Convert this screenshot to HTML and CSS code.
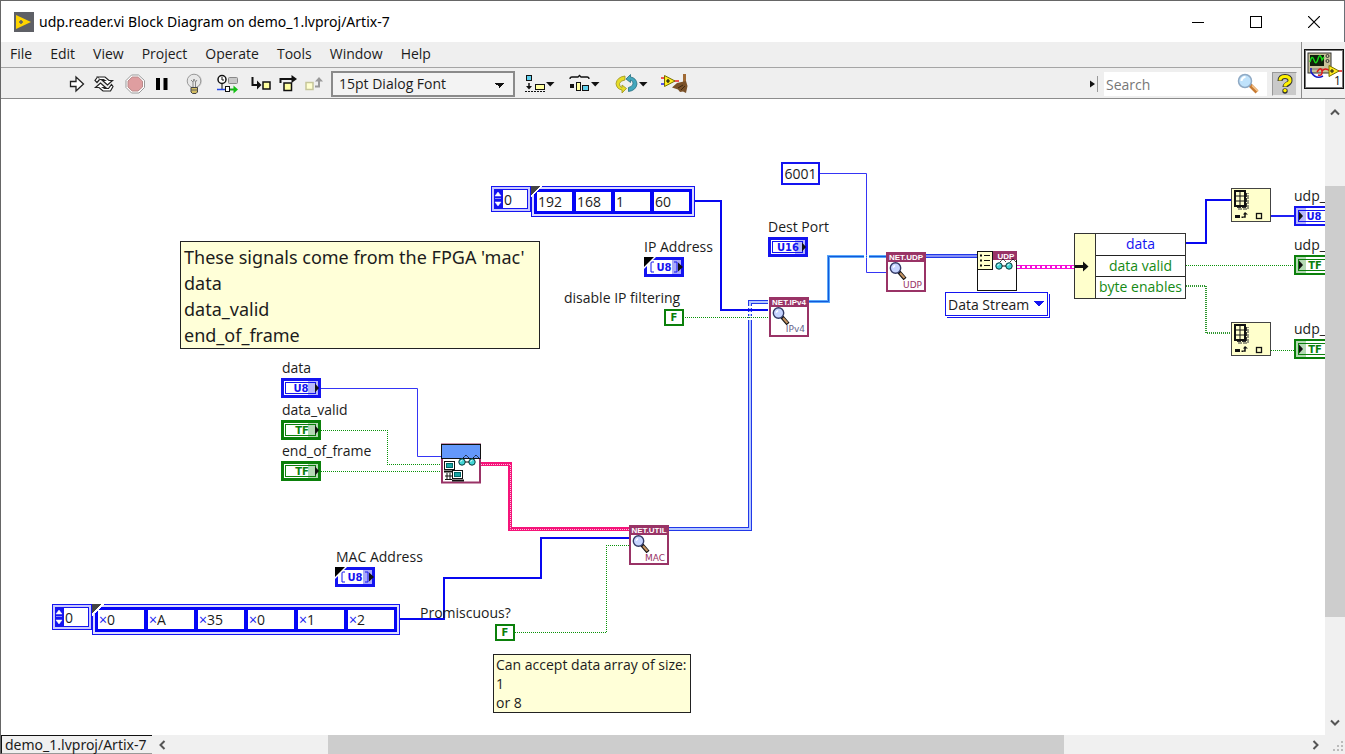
FILE: index.html
```html
<!DOCTYPE html>
<html lang="en">
<head>
<meta charset="utf-8">
<title>udp.reader.vi Block Diagram on demo_1.lvproj/Artix-7</title>
<link rel="stylesheet" href="styles.css">
</head>
<body>
<div class="window">
  <header class="titlebar">
    <svg class="app-icon" viewBox="0 0 20 20" aria-hidden="true">
      <rect width="20" height="20" fill="#5e6066"/>
      <path d="M2 3 L17 10 L2 17 Z" fill="#ffd500"/>
      <path d="M7 8 v4 M5 10 h4" stroke="#5e6066" stroke-width="1.500"/>
    </svg>
    <h1 class="title">udp.reader.vi Block Diagram on demo_1.lvproj/Artix-7</h1>
    <div class="window-buttons">
      <button class="window-button" aria-label="Minimize"><svg width="12" height="12" viewBox="0 0 12 12"><path d="M0 6.500h12" stroke="#000"/></svg></button>
      <button class="window-button" aria-label="Maximize"><svg width="12" height="12" viewBox="0 0 12 12"><rect x=".5" y=".5" width="11" height="11" fill="none" stroke="#000"/></svg></button>
      <button class="window-button" aria-label="Close"><svg width="12" height="12" viewBox="0 0 12 12"><path d="M0 0L12 12M12 0L0 12" stroke="#000" stroke-width="1.200"/></svg></button>
    </div>
  </header>

  <div class="bars">
    <div class="bar-stack">
      <nav class="menu">
        <button>File</button><button>Edit</button><button>View</button><button>Project</button><button>Operate</button><button>Tools</button><button>Window</button><button>Help</button>
      </nav>
      <div class="toolbar">
        <button class="tool" aria-label="Run"><svg width="16" height="18" viewBox="0 0 16 18"><path d="M1.500 6.500H7V2l7.500 7L7 16v-4.500H1.500z" fill="#fff" stroke="#222" stroke-width="1.300"/></svg></button>
        <button class="tool" aria-label="Run continuously"><svg width="22" height="18" viewBox="0 0 22 18"><path d="M4.500 2H12l4 3.500h3.500L14.500 10l-5-4.500h2.500L10.500 4.500H6.500z" fill="#fff" stroke="#222" stroke-width="1.200"/><path d="M17.500 16H10l-4-3.500H2.500L7.500 8l5 4.500H10l1.500 1h4l3-4 1.500 2z" fill="#fff" stroke="#222" stroke-width="1.200"/><path d="M4.500 2L2 5.500 4 7.500 6.500 4.500" fill="#fff" stroke="#222" stroke-width="1.200"/></svg></button>
        <button class="tool" aria-label="Abort execution"><svg width="24" height="20" viewBox="0 0 24 20"><path d="M8.500 1h7L21.500 6.500v7L16 19H8.500L3 13.500v-7z" fill="#fff" stroke="#999"/><path d="M9.200 3h6l4.300 4.200v5.800L15 17H9.200L5 13V7z" fill="#df9ea0" stroke="#b98a8a"/></svg></button>
        <button class="tool" aria-label="Pause"><svg width="14" height="14" viewBox="0 0 14 14"><path d="M1 1h4v12H1zM8.500 1h4v12h-4z" fill="#000"/></svg></button>
        <button class="tool tool-apart" aria-label="Highlight execution"><svg width="18" height="22" viewBox="0 0 18 22"><circle cx="10" cy="8" r="7" fill="#ccc"/><circle cx="9" cy="8" r="6.800" fill="#e8e8e8" stroke="#999"/><path d="M6 7l2 2 1-3 1.500 3L12 7M8 9v6M10.500 9v6" fill="none" stroke="#888"/><path d="M6 14.500h6.500V19L11 20.500H7.500L6 19z" fill="#d3bd62" stroke="#444"/><path d="M6 17h6.500" stroke="#666"/></svg></button>
        <button class="tool" aria-label="Retain wire values"><svg width="32" height="20" viewBox="0 0 32 20"><circle cx="11" cy="5.500" r="4" fill="#fff" stroke="#111" stroke-width="1.500"/><path d="M11 3v3h2M11 9.500V15" fill="none" stroke="#111"/><rect x="17.500" y="3.500" width="9" height="6" rx="1" fill="#c8c8c8" stroke="#888"/><path d="M6 15.500h13" stroke="#2548e8" stroke-width="1.500"/><path d="M19 15.500h4" stroke="#1aa51a" stroke-width="2"/><path d="M22.500 11.500v8l4.500-4z" fill="#12c012"/><rect x="14.500" y="12.500" width="4" height="5" fill="#fff" stroke="#111"/></svg></button>
        <button class="tool" aria-label="Step into"><svg width="20" height="18" viewBox="0 0 20 18"><path d="M1.500 2v8h6" fill="none" stroke="#111" stroke-width="2"/><path d="M6 5.500v9l4.500-4.500z" fill="#111"/><rect x="12" y="7" width="7" height="7" fill="#ffffa0" stroke="#111" stroke-width="1.500"/></svg></button>
        <button class="tool" aria-label="Step over"><svg width="18" height="18" viewBox="0 0 18 18"><path d="M1.500 8V4h12" fill="none" stroke="#111" stroke-width="2"/><path d="M12.500 0v8L18 4z" fill="#111"/><rect x="5" y="8" width="7.500" height="7.500" fill="#ffffa0" stroke="#111" stroke-width="1.500"/></svg></button>
        <button class="tool" aria-label="Step out"><svg width="18" height="18" viewBox="0 0 18 18"><rect x="1" y="7.500" width="7" height="7" fill="#ffffd0" stroke="#c6c69a" stroke-width="1.500"/><path d="M10 11.500h4V5" fill="none" stroke="#999" stroke-width="2"/><path d="M10 6.500h8L14 2z" fill="#999"/></svg></button>
        <select class="font-select" aria-label="Text settings"><option>15pt Dialog Font</option></select>
        <button class="tool" aria-label="Align objects"><svg width="32" height="20" viewBox="0 0 32 20"><rect x="3.500" y="1.500" width="5" height="5" fill="#5fd0ee" stroke="#111"/><path d="M6 9v4" stroke="#111" stroke-width="1.500"/><path d="M2 17.500h20" stroke="#111" stroke-dasharray="2 1"/><path d="M3 12h6L6 15.500z" fill="#111"/><rect x="12.500" y="10.500" width="9" height="5" fill="#ffffa0" stroke="#111"/><path d="M23 8h8.500l-4.300 4.500z" fill="#111"/></svg></button>
        <button class="tool" aria-label="Distribute objects"><svg width="38" height="20" viewBox="0 0 38 20"><path d="M7 5q0-2 2-2h6l1.500-1.500L18 3h6q2 0 2 2" fill="none" stroke="#111" stroke-width="1.300"/><rect x="7" y="10" width="4" height="4" fill="#111"/><rect x="13.500" y="8.500" width="4" height="8" fill="#ffffa0" stroke="#111"/><rect x="19.500" y="11.500" width="6" height="5" fill="#5fd0ee" stroke="#111"/><path d="M28 8h8.500l-4.300 4.500z" fill="#111"/></svg></button>
        <button class="tool" aria-label="Reorder"><svg width="40" height="20" viewBox="0 0 40 20"><path d="M16 2Q8 3 7 9.500 7.500 15 13 16v3l4.500-4.500L13 11v2.500q-3-1-2.500-4Q11.500 6.500 16 6z" fill="#e6dc28" stroke="#9a921c" stroke-width=".8"/><path d="M19.500 17.500q7.500-1 8.500-7.500-.5-6-6.500-7V.5L17 5l4.500 3.500V6q3 1 2.500 4-1 3-4.500 3.500z" fill="#43a7bd" stroke="#246d7f" stroke-width=".8"/><path d="M30 8h8.500l-4.300 4.500z" fill="#111"/></svg></button>
        <button class="tool" aria-label="Clean up diagram"><svg width="32" height="20" viewBox="0 0 32 20"><path d="M4 4h4M17 7h5" stroke="#e22" stroke-width="1.500"/><path d="M4 10h4" stroke="#22e" stroke-width="1.500"/><path d="M7.500 1.500L18 7 7.500 12.500z" fill="#ffee20" stroke="#766c00"/><path d="M11 5v4M9 7h4" stroke="#111" stroke-width="1.200"/><path d="M26 0h3v9h-3z" fill="#a06a35"/><path d="M20 9l9-2 1.500 5-1.500 7-3-1.500-3 .5-2-2.500-6-2z" fill="#7a5129"/><path d="M21 14l5-3M24 16l4-4" stroke="#3f2810"/></svg></button>

        <div class="search-area">
          <button class="search-toggle" aria-label="Collapse search"><svg width="9" height="16" viewBox="0 0 9 16"><path d="M0 4.500l5 3.500-5 3.500z" fill="#111"/><path d="M7.500 0v16" stroke="#999"/></svg></button>
          <label class="search">
            <input type="search" placeholder="Search" aria-label="Search">
            <svg width="22" height="22" viewBox="0 0 22 22"><path d="M13 12l7 7" stroke="#c77a32" stroke-width="4"/><path d="M15 12.500l6 6" stroke="#f6c68d" stroke-width="1.500"/><circle cx="8" cy="8" r="6.500" fill="#bfe2fb" stroke="#8fa9c4" stroke-width="1.500"/><path d="M4.500 8a4 4 0 0 1 4-4" stroke="#fff" stroke-width="2" fill="none"/></svg>
          </label>
          <button class="help-button" aria-label="Context help"><svg width="16" height="20" viewBox="0 0 16 20"><path d="M3 7q0-4.500 5-4.500T13 6.500q0 2-2.500 3.500T8 13" fill="none" stroke="#333" stroke-width="5"/><circle cx="8" cy="17" r="2.700" fill="#333"/><path d="M3 6.500q0-4 5-4t5 4q0 2-2.500 3T8 12.500" fill="none" stroke="#fff200" stroke-width="3"/><circle cx="8" cy="16.500" r="1.700" fill="#fff200"/></svg></button>
        </div>
      </div>
    </div>
    <div class="vi-pane">
      <button class="vi-icon" aria-label="VI icon"><svg width="38" height="38" viewBox="0 0 38 38"><rect x="3" y="3" width="23" height="20" fill="#c9c29a" stroke="#333"/><rect x="5" y="5" width="14" height="11" fill="#10200c"/><path d="M5 12q2-8 4-2t4-1 4 1l2-3" fill="none" stroke="#17d817" stroke-width="1.400"/><circle cx="22.500" cy="6" r="1.500" fill="none" stroke="#333"/><circle cx="22.500" cy="11" r="1.500" fill="none" stroke="#333"/><path d="M5 19h13" stroke="#777"/><path d="M6 18v4q5 8 12 4" fill="none" stroke="#1818c8" stroke-width="1.500"/><path d="M12 22q4-6 5-1t-4 4M17 21q3-4 8 0M33 21h4" fill="none" stroke="#e01818" stroke-width="1.500"/><path d="M24 15.500L34 21l-10 5.500z" fill="#ffe81a" stroke="#777000"/><path d="M27 19v4M25 21h4" stroke="#111"/><text x="29" y="35" class="vi-number">1</text></svg></button>
    </div>
  </div>

  <main class="workspace">
    <section class="canvas" aria-label="Block diagram">
      <svg class="wires" width="1324" height="636" viewBox="1 99 1324 636" aria-hidden="true">
        <defs>
          <g id="terminal-frame">
            <rect x="1.500" y="1.500" width="37" height="17" fill="#fff" stroke="currentColor" stroke-width="3"/>
            <rect x="27" y="3" width="10" height="14" fill="currentColor" opacity=".3"/>
            <rect x="4.500" y="4.500" width="30" height="11" fill="none" stroke="currentColor"/>
          </g>
          <path id="input-arrow" d="M34 5.500L38 10l-4 4.500z" fill="#111"/>
          <g id="array-terminal">
            <rect x="1.500" y="1.500" width="37" height="17" fill="#fff" stroke="currentColor" stroke-width="3"/>
            <rect x="28" y="3" width="9" height="14" fill="#a9a9fa"/>
            <path d="M10 5H7v10h3M30 5h3v10h-3" fill="none" stroke="currentColor"/>
            <path d="M0 0h12L0 12z" fill="#fff"/><path d="M0 0h10L0 10z" fill="#000"/>
            <path d="M34 5.500L39 10l-5 4.500z" fill="#111"/>
            <text x="20" y="14" class="type">U8</text>
          </g>
          <g id="output-terminal">
            <rect x="1" y="1" width="37" height="18" fill="#fff" stroke="currentColor" stroke-width="2"/>
            <rect x="2" y="2" width="10" height="16" fill="currentColor" opacity=".3"/>
            <rect x="4.500" y="4.500" width="35" height="11" fill="none" stroke="currentColor"/>
            <path d="M5 5.500L9 10l-4 4.500z" fill="#111"/>
          </g>
          <g id="net-node">
            <rect x="1" y="1" width="38" height="38" fill="#fff" stroke="#993366" stroke-width="2"/>
            <rect x="0" y="0" width="40" height="10" fill="#993366"/>
            <path d="M13 20l6 7" stroke="#111" stroke-width="4"/><path d="M14 21l4.500 5" stroke="#c49363" stroke-width="2"/>
            <circle cx="9.500" cy="16" r="5.200" fill="#c6d4ff" stroke="#333a66" stroke-width="1.400"/>
            <path d="M7 15.500l2-2" stroke="#fff" stroke-width="1.500"/>
          </g>
          <g id="glasses" fill="#42d5d5" stroke="#063a3a" stroke-width="1">
            <path d="M3 6l5-5 3 3M13 6l5-5 3 3" fill="none" stroke="#111" stroke-dasharray="2 1"/>
            <circle cx="4" cy="8" r="3.200"/><circle cx="14" cy="8" r="3.200"/><path d="M7 8h4" stroke="#111"/>
            <path d="M2.500 7.500l2-1.500M12.500 7.500l2-1.500" stroke="#fff"/>
          </g>
          <g id="computer"><rect x=".5" y=".5" width="10" height="8" fill="#fff" stroke="#111"/><rect x="2.500" y="2.500" width="6" height="4" fill="#18a5a5" stroke="#066"/><path d="M0 10.500h12" stroke="#111" stroke-width="2"/></g>
          <g id="index-node">
            <rect x=".5" y=".5" width="39" height="33" fill="#ffffcc" stroke="#444"/>
            <path d="M7 21h10V5M6 19.500h9.500V4" fill="none" stroke="#333" stroke-dasharray="4 1"/>
            <rect x="4" y="3" width="10" height="15" fill="#ffffcc" stroke="#111" stroke-width="2"/>
            <path d="M9 3v15M4 8h10M4 13h10" stroke="#111" stroke-width="1"/>
            <path d="M4 27h5v3H4zM10.500 28.500h2v1.500h-2z" fill="#111"/><path d="M12.500 29H14v-3" stroke="#111" fill="none" stroke-width="1.500"/><path d="M12 26.500h5L14 24z" fill="#111"/>
            <rect x="25.500" y="25.500" width="5" height="5" fill="#ffffcc" stroke="#111" stroke-width="1.300"/>
          </g>
        </defs>

        <g class="wire-thin">
          <path d="M820 173.500H866.500V272.500H886"/>
          <path d="M321 388.500H417.500V456.500H441"/>
        </g>
        <path class="wire-cluster-light" d="M809 301.500H828.500V256.500H886"/>
        <path class="wire-cluster-core" d="M809 301.500H828.500V256.500H886"/>
        <path d="M864 252h2v9h-2zM867 252h2v9h-2z" fill="#fff"/>
        <path class="wire-cluster" d="M926 256H978"/>
        <path class="wire-udp-core" d="M926 256H978"/>
        <path class="wire-cluster" d="M669 529H750V302H768"/>
        <path class="wire-core" d="M669 529H750V302H768"/>
        <path d="M746 306h8v2h-8zM746 312h8v2h-8zM746 316h8v1h-8zM746 318h8v2h-8z" fill="#fff"/>
        <path class="wire-array" d="M693 201H721V310H768"/>
        <path class="wire-array" d="M400 619H444V578H541V538H629"/>
        <path class="wire-array" d="M1186 243H1206V200H1231"/>
        <path class="wire-number" d="M1271 216H1294"/>
        <path class="wire-pink" d="M481 464H510V529H629"/>
        <path class="wire-pink-core" d="M481 464.500H510.500V529.500H629"/>
        <path class="wire-stream" d="M1017 267H1074"/>
        <path class="wire-stream-core" d="M1017 267H1074"/>
        <g class="wire-boolean">
          <path d="M321 430.500H387.500V464.500H441"/>
          <path d="M321 471.500H441"/>
          <path d="M683 317.500H768"/>
          <path d="M515 632.500H606.500V545.500H629"/>
          <path d="M1186 265.500H1294"/>
          <path d="M1271 350.500H1294"/>
        </g>
        <path class="wire-boolean-array" d="M1186 286H1206V333H1231"/>

        <g color="#1414f0">
          <use href="#terminal-frame" x="281" y="378"/><use href="#input-arrow" x="281" y="378"/><text x="301" y="392" class="type">U8</text>
          <use href="#terminal-frame" x="768" y="237"/><use href="#input-arrow" x="768" y="237"/><text x="788" y="251" class="type">U16</text>
          <use href="#output-terminal" x="1294" y="206"/><text x="1314" y="220" class="type">U8</text>
          <use href="#array-terminal" x="644" y="257"/>
          <use href="#array-terminal" x="335" y="567"/>
        </g>
        <g color="#0b800b">
          <use href="#terminal-frame" x="281" y="420"/><use href="#input-arrow" x="281" y="420"/><text x="302" y="434" class="type">TF</text>
          <use href="#terminal-frame" x="281" y="461"/><use href="#input-arrow" x="281" y="461"/><text x="302" y="475" class="type">TF</text>
          <use href="#output-terminal" x="1294" y="255"/><text x="1315" y="269" class="type">TF</text>
          <use href="#output-terminal" x="1294" y="339"/><text x="1315" y="353" class="type">TF</text>
        </g>

        <use href="#net-node" x="769" y="297"/>
        <text x="789" y="305" class="node-head">NET.IPv4</text><text x="805" y="332" class="node-foot node-foot-gray">IPv4</text>
        <use href="#net-node" x="886" y="252"/>
        <text x="906" y="260" class="node-head">NET.UDP</text><text x="922" y="288" class="node-foot">UDP</text>
        <use href="#net-node" x="629" y="525"/>
        <text x="649" y="533" class="node-head">NET.UTIL</text><text x="665" y="561" class="node-foot">MAC</text>

        <rect x="977.500" y="251.500" width="39" height="39" fill="#fff" stroke="#111"/>
        <rect x="993" y="251" width="24" height="9" fill="#993366"/>
        <text x="1006" y="259" class="node-head">UDP</text>
        <rect x="977.500" y="251.500" width="15" height="18" fill="#ffffcc" stroke="#111"/>
        <path d="M984 255.500h6M984 260.500h6M984 265.500h6" stroke="#111"/><path d="M980 255.500h2M980 260.500h2M980 265.500h2" stroke="#111" stroke-width="2"/>
        <use href="#glasses" x="995" y="258"/>

        <rect x="442" y="444.500" width="38" height="38" fill="#fff" stroke="#993366" stroke-width="2"/>
        <rect x="441.500" y="444.500" width="39" height="14" fill="#6498fb" stroke="#111"/>
        <use href="#glasses" x="458" y="454"/>
        <use href="#computer" x="444" y="461"/><use href="#computer" x="452" y="470"/>
        <path d="M445 476h7M445 479.500h7M447 473v6M450 473v6" stroke="#111" fill="none"/>

        <use href="#index-node" x="1231" y="188"/>
        <use href="#index-node" x="1231" y="322"/>
      </svg>

      <span class="label at-data">data</span>
      <span class="label at-data-valid">data_valid</span>
      <span class="label at-end-frame">end_of_frame</span>
      <span class="label at-mac-address">MAC Address</span>
      <span class="label at-ip-address">IP Address</span>
      <label class="label at-filtering" for="filtering">disable IP filtering</label>
      <span class="label at-dest-port">Dest Port</span>
      <label class="label at-promiscuous" for="promiscuous">Promiscuous?</label>
      <span class="label at-udp-1">udp_</span>
      <span class="label at-udp-2">udp_</span>
      <span class="label at-udp-3">udp_</span>

      <p class="note note-signals">These signals come from the FPGA 'mac'<br>data<br>data_valid<br>end_of_frame</p>
      <p class="note note-size">Can accept data array of size:<br>1<br>or 8</p>

      <div class="array-constant at-ip-array">
        <div class="array-index"><svg width="8" height="20" viewBox="0 0 8 20"><rect width="8" height="20" fill="#1414f0"/><path d="M1 7l3-4 3 4zM1 13l3 4 3-4zM1 9.500h6" fill="#fff" stroke="#fff" stroke-width=".5"/></svg><input value="0" aria-label="IP array index"></div>
        <div class="array-frame"><div class="array-cells">
          <span class="cell"><input value="192" aria-label="IP byte 1"></span><span class="cell"><input value="168" aria-label="IP byte 2"></span><span class="cell"><input value="1" aria-label="IP byte 3"></span><span class="cell"><input value="60" aria-label="IP byte 4"></span>
        </div></div>
      </div>

      <div class="array-constant at-mac-array">
        <div class="array-index"><svg width="8" height="20" viewBox="0 0 8 20"><rect width="8" height="20" fill="#1414f0"/><path d="M1 7l3-4 3 4zM1 13l3 4 3-4zM1 9.500h6" fill="#fff" stroke="#fff" stroke-width=".5"/></svg><input value="0" aria-label="MAC array index"></div>
        <div class="array-frame"><div class="array-cells">
          <label class="cell cell-hex">×<input value="0"></label><label class="cell cell-hex">×<input value="A"></label><label class="cell cell-hex">×<input value="35"></label><label class="cell cell-hex">×<input value="0"></label><label class="cell cell-hex">×<input value="1"></label><label class="cell cell-hex">×<input value="2"></label>
        </div></div>
      </div>

      <input class="constant at-port" value="6001" aria-label="Port constant">
      <button class="boolean at-filtering-value" id="filtering">F</button>
      <button class="boolean at-promiscuous-value" id="promiscuous">F</button>
      <select class="poly-select" aria-label="Instance"><option>Data Stream</option></select>

      <div class="unbundle">
        <svg class="unbundle-input" width="20" height="64" viewBox="0 0 20 64"><path d="M0 31h8v-3.500l5.500 5-5.500 5V34H0z" fill="#111"/></svg>
        <div class="unbundle-rows"><span class="is-number">data</span><span>data valid</span><span>byte enables</span></div>
      </div>
    </section>

    <div class="scroll scroll-vertical">
      <button aria-label="Scroll up"><svg width="10" height="8" viewBox="0 0 10 8"><path d="M1 6.500l4-4 4 4" class="chevron"/></svg></button>
      <div class="track"><i class="before"></i><i class="thumb"></i><i class="after"></i></div>
      <button aria-label="Scroll down"><svg width="10" height="8" viewBox="0 0 10 8"><path d="M1 1.500l4 4 4-4" class="chevron"/></svg></button>
    </div>
    <footer class="statusbar">
      <button class="target">demo_1.lvproj/Artix-7</button>
      <div class="scroll scroll-horizontal">
        <button aria-label="Scroll left"><svg width="8" height="10" viewBox="0 0 8 10"><path d="M6.500 1l-4 4 4 4" class="chevron"/></svg></button>
        <div class="track"><i class="before"></i><i class="thumb"></i><i class="after"></i></div>
        <button aria-label="Scroll right"><svg width="8" height="10" viewBox="0 0 8 10"><path d="M1.500 1l4 4-4 4" class="chevron"/></svg></button>
      </div>
      <svg class="grip" width="19" height="19" viewBox="0 0 19 19" aria-hidden="true"><path d="M15 6h2v2h-2zM15 10h2v2h-2zM15 14h2v2h-2zM11 10h2v2h-2zM11 14h2v2h-2zM7 14h2v2H7z" fill="#bbb"/></svg>
    </footer>
  </main>
</div>
</body>
</html>
```
FILE: styles.css
```css
:root {
  --blue: #1414f0;
  --green: #0b800b;
  --chrome: #efefef;
  --line: #8c8c8c;
}

* { box-sizing: border-box; }

body {
  margin: 0;
  font-family: "Open Sans", "Noto Sans", sans-serif;
  font-size: 14px;
  color: #1c1c1c;
  background: #fff;
}

button, input, select {
  margin: 0;
  padding: 0;
  border: 0;
  border-radius: 0;
  background: none;
  color: inherit;
  font: inherit;
}

svg { display: block; flex: none; }

.window {
  display: flex;
  flex-direction: column;
  height: 100vh;
  border-top: 1px solid #666;
  border-left: 1px solid #666;
  overflow: hidden;
}

/* Title bar */
.titlebar {
  display: flex;
  align-items: center;
  flex: none;
  height: 41px;
  padding-left: 13px;
  border-right: 1px solid #6a7078;
}
.app-icon { width: 20px; height: 20px; }
.title {
  flex: 1;
  margin: 0 0 0 5px;
  font-family: "Noto Sans", sans-serif;
  font-size: 14px;
  font-weight: 400;
  color: #000;
  white-space: nowrap;
}
.window-buttons { display: flex; margin-right: 1px; }
.window-button {
  display: grid;
  place-items: center;
  width: 58px;
  height: 40px;
}

/* Menu and toolbar */
.bars {
  display: flex;
  flex: none;
  padding-right: 1px;
  background: var(--chrome);
  border-bottom: 1px solid var(--line);
}
.bar-stack { flex: 1; min-width: 0; }
.menu {
  display: flex;
  gap: 18px;
  height: 26px;
  padding: 0 9px 3px;
  border-bottom: 1px solid #a5a5a5;
}
.toolbar {
  display: flex;
  align-items: center;
  gap: 8px;
  height: 30px;
  padding: 2px 0 0 68px;
}
.tool { display: block; flex: none; }
.tool-apart { margin-left: 8px; }
.font-select {
  appearance: none;
  flex: none;
  width: 184px;
  height: 26px;
  padding: 0 6px 2px;
  border: 2px solid #8a8a8a;
  background:
    linear-gradient(to bottom right, #111 50%, transparent 50%) right 8px top 10px / 5px 5px no-repeat,
    linear-gradient(to bottom left, #111 50%, transparent 50%) right 13px top 10px / 5px 5px no-repeat,
    #f3f3f3;
}
.search-area {
  display: flex;
  align-items: center;
  margin-left: auto;
  padding-right: 4px;
}
.search {
  display: flex;
  align-items: center;
  width: 163px;
  height: 24px;
  margin: 0 5px;
  padding: 0 8px 0 2px;
  background: #fff;
}
.search input { flex: 1; min-width: 0; height: 24px; outline: 0; }
.search input::placeholder { color: #777; opacity: 1; }
.help-button {
  display: grid;
  place-items: center;
  width: 25px;
  height: 24px;
  background: #c9c9c9;
  border: 1px solid #999;
  border-right-color: #eee;
  border-bottom-color: #eee;
}
.vi-pane {
  display: flex;
  align-items: center;
  width: 43px;
  padding: 1px 0 3px 2px;
  border-left: 1px solid var(--line);
}
.vi-icon { border: 1px solid #111; background: #fff; outline: 1px solid #777; outline-offset: -2px; }
.vi-number { font: 12px "Open Sans", sans-serif; fill: #111; }

/* Workspace */
.workspace {
  display: grid;
  grid-template-columns: 1fr 20px;
  grid-template-rows: 1fr 19px;
  flex: 1;
  min-height: 0;
}
.canvas { position: relative; overflow: hidden; background: #fff; }
.wires { position: absolute; left: 0; top: 0; }

.wire-thin { fill: none; stroke: #3535f5; stroke-width: 1; }
.wire-number { fill: none; stroke: #2020f5; stroke-width: 2; }
.wire-array { fill: none; stroke: #0808f0; stroke-width: 2; }
.wire-cluster { fill: none; stroke: #2238e8; stroke-width: 4; }
.wire-core { fill: none; stroke: #b4c8ff; stroke-width: 2; }
.wire-udp-core { fill: none; stroke: #8590f5; stroke-width: 2; }
.wire-cluster-light { fill: none; stroke: #5aa9fb; stroke-width: 3; }
.wire-cluster-core { fill: none; stroke: #1458d8; stroke-width: 1; }
.wire-pink { fill: none; stroke: #f5147a; stroke-width: 4; }
.wire-pink-core { fill: none; stroke: #ffc0dc; stroke-width: 1; stroke-dasharray: 1 1; }
.wire-stream { fill: none; stroke: #f50fd8; stroke-width: 4; }
.wire-stream-core { fill: none; stroke: #fff; stroke-width: 2; stroke-dasharray: 3 2; }
.wire-boolean { fill: none; stroke: #089208; stroke-width: 1; stroke-dasharray: 1 1; shape-rendering: crispEdges; }
.wire-boolean-array { fill: none; stroke: #2f962f; stroke-width: 2; stroke-dasharray: 1 1; }

.type { font: bold 10px "DejaVu Sans", sans-serif; text-anchor: middle; fill: currentColor; }
.node-head { font: bold 8px "Liberation Sans", sans-serif; text-anchor: middle; fill: #fff; }
.node-foot { font: 9px "DejaVu Sans", sans-serif; text-anchor: end; fill: #993366; }
.node-foot-gray { fill: #66668c; }

.label { position: absolute; line-height: 18px; white-space: nowrap; }
.at-data { left: 281px; top: 260px; }
.at-data-valid { left: 281px; top: 302px; }
.at-end-frame { left: 281px; top: 343px; }
.at-mac-address { left: 335px; top: 449px; }
.at-ip-address { left: 643px; top: 139px; }
.at-filtering { left: 563px; top: 190px; }
.at-dest-port { left: 767px; top: 119px; }
.at-promiscuous { left: 419px; top: 505px; }
.at-udp-1 { left: 1293px; top: 88px; }
.at-udp-2 { left: 1293px; top: 137px; }
.at-udp-3 { left: 1293px; top: 221px; }

.note {
  position: absolute;
  margin: 0;
  border: 1px solid #222;
  background: #ffffd8;
  white-space: nowrap;
}
.note-signals { left: 179px; top: 142px; width: 360px; padding: 2px 3px 0; font-family: "Noto Sans", sans-serif; font-size: 18px; line-height: 26px; }
.note-size { left: 492px; top: 555px; width: 198px; padding: 0 2px; line-height: 19px; }

.array-constant { position: absolute; display: flex; align-items: flex-start; }
.at-ip-array { left: 490px; top: 87px; }
.at-mac-array { left: 51px; top: 505px; }
.array-index {
  display: flex;
  width: 40px;
  height: 26px;
  padding: 2px;
  border: 1px solid var(--blue);
  background: #c9c9ff;
}
.array-index input { width: 26px; height: 20px; padding-left: 1px; border: 1px solid var(--blue); background: #fff; }
.array-frame { position: relative; padding: 2px; border: 1px solid var(--blue); background: #dcdcff; }
.array-frame::before {
  content: "";
  position: absolute;
  left: -1px;
  top: -1px;
  width: 12px;
  height: 12px;
  background: linear-gradient(135deg, #444 41%, #fff 41% 50%, transparent 50%);
}
.array-cells { display: flex; gap: 4px; padding: 3px; background: #0505f5; }
.cell { display: flex; align-items: center; width: 35px; height: 19px; padding-left: 1px; background: #fff; }
.cell input { flex: 1; width: 0; height: 19px; }
.cell-hex { width: 46px; color: var(--blue); }
.cell-hex input { color: #1c1c1c; }

.constant { position: absolute; border: 2px solid var(--blue); background: #fff; text-align: center; }
.at-port { left: 780px; top: 63px; width: 39px; height: 23px; }
.boolean {
  position: absolute;
  width: 20px;
  height: 17px;
  border: 2px solid var(--green);
  background: #fff;
  color: var(--green);
  font: bold 10px/12px "DejaVu Sans", sans-serif;
}
.at-filtering-value { left: 663px; top: 210px; }
.at-promiscuous-value { left: 494px; top: 525px; }
.poly-select {
  appearance: none;
  position: absolute;
  left: 944px;
  top: 193px;
  width: 103px;
  height: 24px;
  padding: 0 2px;
  border: 1px solid var(--blue);
  box-shadow: 1px 1px 0 #fff, 2px 2px 0 var(--blue);
  background:
    linear-gradient(to bottom right, var(--blue) 50%, transparent 50%) right 3px top 8px / 5px 6px no-repeat,
    linear-gradient(to bottom left, var(--blue) 50%, transparent 50%) right 8px top 8px / 5px 6px no-repeat,
    #fff;
}
.unbundle {
  position: absolute;
  left: 1073px;
  top: 134px;
  display: flex;
  width: 112px;
  border: 1px solid #333;
  background: #fff;
}
.unbundle-input { background: #ffffcc; }
.unbundle-rows { flex: 1; border-left: 1px solid #333; color: #158a15; text-align: center; white-space: nowrap; }
.unbundle-rows span { display: block; height: 21px; line-height: 20px; }
.unbundle-rows span + span { border-top: 1px solid #222; }
.unbundle-rows .is-number { color: var(--blue); }

/* Scroll bars */
.scroll { display: flex; background: #f0f0f0; }
.scroll button { display: grid; place-items: center; flex: none; }
.track { display: flex; flex: 1; flex-direction: inherit; }
.thumb { background: #cdcdcd; }
.chevron { fill: none; stroke: #555; stroke-width: 2; }
.scroll-vertical { flex-direction: column; }
.scroll-vertical button { height: 25px; }
.scroll-vertical .before { flex: 62; }
.scroll-vertical .thumb { flex: 431; }
.scroll-vertical .after { flex: 93; }
.scroll-horizontal { flex: 1; }
.scroll-horizontal button { width: 20px; }
.scroll-horizontal .before { flex: 156; }
.scroll-horizontal .thumb { flex: 735; }
.scroll-horizontal .after { flex: 242; }
.statusbar { grid-column: 1 / -1; display: flex; background: #f0f0f0; }
.target {
  width: 151px;
  padding: 0 2px 0 3px;
  border-top: 1px solid #111;
  border-left: 1px solid #111;
  border-bottom: 1px solid #999;
  font-family: "Noto Sans", sans-serif;
  line-height: 17px;
  text-align: left;
  white-space: nowrap;
}
```
